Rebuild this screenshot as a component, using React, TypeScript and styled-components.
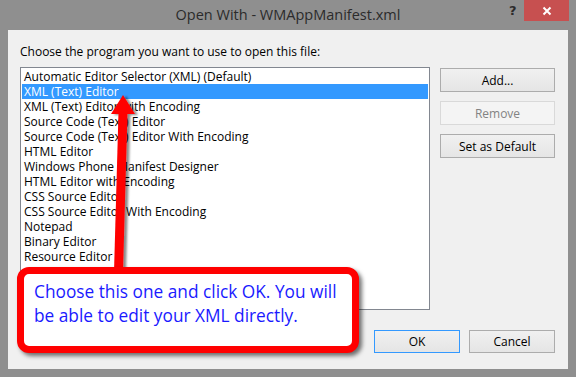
import React from "react";
import styled, { createGlobalStyle } from "styled-components";

const GlobalStyle = createGlobalStyle`
  html, body {
    margin: 0;
    padding: 0;
    background: #8f8f8f;
  }
  body {
    font-family: "Segoe UI", "Open Sans", sans-serif;
  }
`;

const programs = [
  "Automatic Editor Selector (XML) (Default)",
  "XML (Text) Editor",
  "XML (Text) Editor with Encoding",
  "Source Code (Text) Editor",
  "Source Code (Text) Editor With Encoding",
  "HTML Editor",
  "Windows Phone Manifest Designer",
  "HTML Editor with Encoding",
  "CSS Source Editor",
  "CSS Source Editor With Encoding",
  "Notepad",
  "Binary Editor",
  "Resource Editor",
];

export default function App() {
  const selected = 1;

  return (
    <>
      <GlobalStyle />
      <Window>
        <TitleBar>
          <span />
          <Title>Open With - WMAppManifest.xml</Title>
          <Controls>
            <HelpGlyph>?</HelpGlyph>
            <CloseButton>
              <svg width="10" height="10" viewBox="0 0 10 10">
                <path
                  d="M1.5 1.5 L8.5 8.5 M8.5 1.5 L1.5 8.5"
                  stroke="#fff"
                  strokeWidth="2"
                />
              </svg>
            </CloseButton>
          </Controls>
        </TitleBar>
        <Client>
          <Label>Choose the program you want to use to open this file:</Label>
          <MainRow>
            <ListBox>
              {programs.map((name, i) => (
                <ListItem key={name} $selected={i === selected}>
                  {name}
                </ListItem>
              ))}
            </ListBox>
            <SideButtons>
              <Button>Add...</Button>
              <Button disabled>Remove</Button>
              <Button>Set as Default</Button>
            </SideButtons>
          </MainRow>
          <Footer>
            <Button $small $primary>
              OK
            </Button>
            <Button $small>Cancel</Button>
          </Footer>
        </Client>

        {/* annotation laid over the dialog */}
        <Arrow width="40" height="185" viewBox="0 0 40 185">
          <defs>
            <filter id="sh" x="-50%" y="-10%" width="200%" height="120%">
              <feDropShadow
                dx="3"
                dy="1"
                stdDeviation="1.2"
                floodColor="#000"
                floodOpacity="0.45"
              />
            </filter>
          </defs>
          <g filter="url(#sh)" fill="#ff0000">
            <polygon points="13.5,22 22.5,22 18,182 9,182" />
            <polygon points="18,5 30,24 6,24" />
          </g>
        </Arrow>
        <Callout>
          Choose this one and click OK. You will
          <br />
          be able to edit your XML directly.
        </Callout>
      </Window>
    </>
  );
}

const Window = styled.div`
  position: relative;
  width: 576px;
  height: 377px;
  background: #8f8f8f;
  display: flex;
  flex-direction: column;
  overflow: hidden;
`;

const TitleBar = styled.div`
  height: 30px;
  display: grid;
  grid-template-columns: 1fr auto 1fr;
`;

const Title = styled.div`
  font-size: 14.5px;
  line-height: 30px;
  color: #2b2b2b;
  white-space: nowrap;
`;

const Controls = styled.div`
  display: flex;
  justify-content: flex-end;
  align-items: flex-start;
  padding-right: 7px;
`;

const HelpGlyph = styled.div`
  font-family: "DejaVu Sans", sans-serif;
  font-weight: 700;
  font-size: 13px;
  line-height: 21px;
  color: #2b2b2b;
  width: 15px;
`;

const CloseButton = styled.div`
  width: 45px;
  height: 21px;
  background: #c75050;
  display: flex;
  align-items: center;
  justify-content: center;
`;

const Client = styled.div`
  flex: 1;
  margin: 0 8px 8px 8px;
  background: #f0f0f0;
  padding: 14px 13px 16px 12px;
  display: flex;
  flex-direction: column;
`;

const Label = styled.div`
  font-size: 12px;
  line-height: 16px;
  color: #000;
`;

const MainRow = styled.div`
  display: flex;
  gap: 10px;
  margin-top: 7px;
`;

const ListBox = styled.div`
  box-sizing: border-box;
  width: 410px;
  height: 243px;
  border: 1px solid #828790;
  background: #fff;
  padding: 1px;
`;

const ListItem = styled.div<{ $selected?: boolean }>`
  height: 15px;
  line-height: 15px;
  font-size: 12px;
  padding-left: 2px;
  white-space: nowrap;
  color: ${(p) => (p.$selected ? "#fff" : "#000")};
  background: ${(p) => (p.$selected ? "#3399ff" : "transparent")};
`;

const SideButtons = styled.div`
  display: flex;
  flex-direction: column;
  gap: 9px;
  padding-top: 1px;
`;

const Button = styled.button<{ $small?: boolean; $primary?: boolean }>`
  box-sizing: border-box;
  width: ${(p) => (p.$small ? "86px" : "115px")};
  height: ${(p) => (p.$small ? "23px" : "24px")};
  padding: 0;
  font-family: inherit;
  font-size: 12px;
  color: #000;
  border: 1px solid ${(p) => (p.$primary ? "#3399ff" : "#acacac")};
  background: linear-gradient(#f0f0f0, #e5e5e5);

  &:disabled {
    color: #838383;
    border-color: #d9d9d9;
    background: #f4f4f4;
  }
`;

const Footer = styled.div`
  display: flex;
  justify-content: flex-end;
  gap: 9px;
  margin-top: 20px;
`;

const Arrow = styled.svg`
  position: absolute;
  left: 105px;
  top: 90px;
  overflow: visible;
`;

const Callout = styled.div`
  position: absolute;
  left: 17px;
  top: 267px;
  box-sizing: border-box;
  width: 342px;
  height: 86px;
  border: 7px solid #ff0000;
  border-radius: 12px;
  background: #fff;
  box-shadow: 3px 3px 4px rgba(0, 0, 0, 0.55);
  padding: 6px 0 0 10px;
  font-size: 17.3px;
  line-height: 24px;
  color: #1a1aff;
  white-space: nowrap;
`;
